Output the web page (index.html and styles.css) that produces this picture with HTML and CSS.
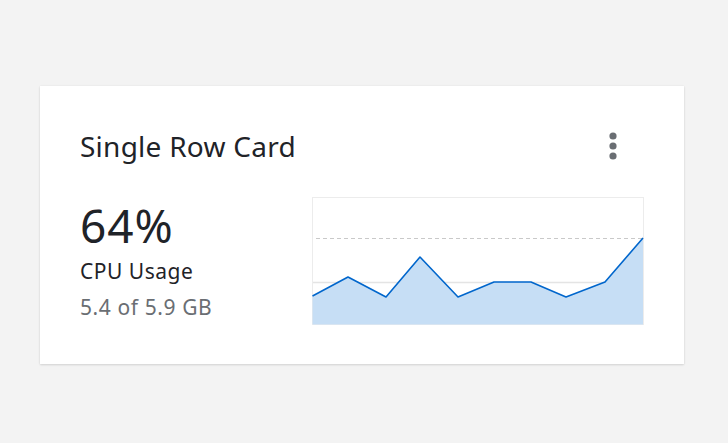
FILE: index.html
```html
<!DOCTYPE html>
<html>
<head>
<meta charset="utf-8">
<link rel="stylesheet" href="styles.css">
</head>
<body>
<div class="card">
  <div class="card-header">
    <h2 class="card-title">Single Row Card</h2>
    <button class="kebab" aria-label="Actions">
      <svg width="8" height="28" viewBox="0 0 8 28"><circle cx="4" cy="4" r="3.6" fill="#6a6e73"/><circle cx="4" cy="14" r="3.6" fill="#6a6e73"/><circle cx="4" cy="24" r="3.6" fill="#6a6e73"/></svg>
    </button>
  </div>
  <div class="card-body">
    <div class="stats">
      <div class="value">64%</div>
      <div class="label">CPU Usage</div>
      <div class="sub">5.4 of 5.9 GB</div>
    </div>
    <div class="chart">
      <svg width="332" height="128" viewBox="0 0 332 128">
        <rect x="0.5" y="0.5" width="331" height="127" fill="#fff" stroke="#ececec"/>
        <line x1="1" y1="85.5" x2="331" y2="85.5" stroke="#e4e4e4" stroke-width="1.5"/>
        <polygon points="0.5,99 36,80 74,100 108,60 146,100 182,85 219,85 254,100 293,85 331,41 331,127.5 0.5,127.5" fill="#c6def5"/>
        <line x1="4" y1="41.5" x2="331" y2="41.5" stroke="#c9c9c9" stroke-width="1" stroke-dasharray="4 3"/>
        <polyline points="0.5,99 36,80 74,100 108,60 146,100 182,85 219,85 254,100 293,85 331,41" fill="none" stroke="#0066cc" stroke-width="1.6" stroke-linejoin="round"/>
      </svg>
    </div>
  </div>
</div>
</body>
</html>
```
FILE: styles.css
```css
* { box-sizing: border-box; }
html, body { margin: 0; padding: 0; }
body {
  background: #f3f3f3;
  font-family: "Noto Sans", "Open Sans", sans-serif;
  color: #151515;
  padding: 86px 44px 79px 40px;
}
.card {
  background: #fff;
  width: 644px;
  height: 278px;
  padding: 40px 40px 40px 40px;
  box-shadow: 0 1px 2px rgba(3, 3, 3, 0.12), 0 0 2px rgba(3, 3, 3, 0.06);
}
.card-header {
  display: flex;
  justify-content: space-between;
  align-items: center;
  height: 40px;
}
.card-title {
  margin: 0;
  font-size: 28px;
  font-weight: 400;
  line-height: 38px;
  color: #1f2328;
  letter-spacing: 0.25px;
}
.kebab {
  border: 0;
  background: none;
  padding: 0;
  margin-right: 27px;
  display: flex;
}
.card-body {
  display: flex;
  justify-content: space-between;
  align-items: center;
  margin-top: 31px;
}
.stats {
  display: flex;
  flex-direction: column;
}
.value {
  font-size: 46px;
  line-height: 53px;
  letter-spacing: 1px;
  color: #1f2328;
}
.label {
  font-size: 21px;
  line-height: 38px;
  letter-spacing: 0.5px;
  color: #1f2328;
}
.sub {
  font-size: 21px;
  line-height: 34px;
  letter-spacing: 0.6px;
  color: #6a6e73;
}
.chart { display: flex; }
```
